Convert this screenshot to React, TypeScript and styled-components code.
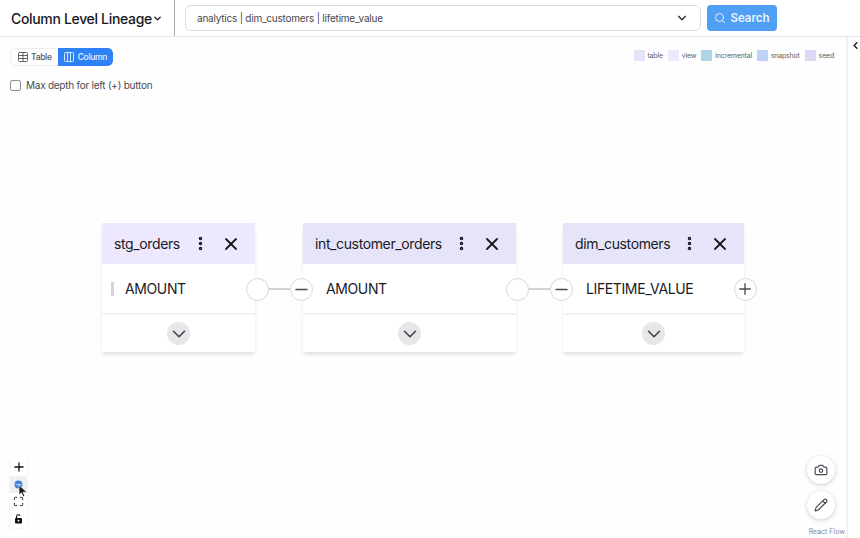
import { createGlobalStyle, styled } from "styled-components";
import {
  Camera,
  ChevronDown,
  ChevronLeft,
  Columns3,
  EllipsisVertical,
  Maximize,
  Minus,
  Pencil,
  Plus,
  Search,
  Table,
  X,
} from "lucide-react";

const GlobalStyle = createGlobalStyle`
  html, body { margin: 0; height: 100%; }
  body { background: #fff; font-family: Inter, "Liberation Sans", sans-serif; color: #111; overflow: hidden; }
`;

const Page = styled.div`
  width: 860px;
  height: 538px;
  display: flex;
  flex-direction: column;
  overflow: hidden;
`;

const Header = styled.header`
  height: 37px;
  flex: none;
  box-sizing: border-box;
  display: flex;
  align-items: stretch;
  border-bottom: 1px solid #e5e5e8;
`;

const TitleBox = styled.div`
  width: 175px;
  box-sizing: border-box;
  padding-left: 11px;
  display: flex;
  align-items: center;
  border-right: 1px solid #a9a9ad;
  font-size: 14px;
  font-weight: 500;
  letter-spacing: -0.33px;
  color: #17171c;
  white-space: nowrap;
`;

const SearchArea = styled.div`
  flex: 1;
  display: flex;
  align-items: center;
  padding-left: 10px;
  gap: 6px;
`;

const SelectBox = styled.div`
  width: 516px;
  height: 26px;
  box-sizing: border-box;
  display: flex;
  align-items: center;
  justify-content: space-between;
  padding: 0 11px;
  border: 1px solid #dcdce0;
  border-radius: 6px;
  font-size: 10px;
  letter-spacing: -0.22px;
  color: #47474f;
`;

const SearchButton = styled.div`
  width: 70px;
  height: 26px;
  display: flex;
  align-items: center;
  justify-content: center;
  gap: 4px;
  border-radius: 4px;
  background: #4f9ff4;
  color: #eaf3fe;
  font-size: 11.5px;
  font-weight: 600;
`;

const Body = styled.div`
  flex: 1;
  display: flex;
  min-height: 0;
`;

const Canvas = styled.main`
  position: relative;
  flex: 1;
  background: #fefefe;
`;

const SidePanel = styled.aside`
  width: 14px;
  flex: none;
  box-sizing: border-box;
  padding: 3px 0 0 2px;
  border-left: 2px solid #f1f1f3;
  background: #fff;
  color: #17171c;

  svg {
    display: block;
  }
`;

const TopLeft = styled.div`
  position: absolute;
  left: 10px;
  top: 11px;
  display: flex;
  flex-direction: column;
  align-items: flex-start;
  gap: 13px;
`;

const Toggle = styled.div`
  display: flex;
  height: 18px;
  border-radius: 5px;
  box-shadow: 0 0 0 1px #eeeef0 inset;
  overflow: hidden;
`;

const ToggleItem = styled.div<{ $active?: boolean }>`
  display: flex;
  align-items: center;
  gap: 2.5px;
  padding: ${(p) => (p.$active ? "0 6px 0 5.5px" : "0 6px 0 6.5px")};
  font-size: 8.5px;
  font-weight: 500;
  letter-spacing: -0.3px;
  color: ${(p) => (p.$active ? "#e8f1fe" : "#55555c")};
  background: ${(p) => (p.$active ? "#2f82f6" : "transparent")};
  border-radius: ${(p) => (p.$active ? "0 5px 5px 0" : "0")};
`;

const DepthRow = styled.label`
  display: flex;
  align-items: center;
  gap: 5px;
  font-size: 10px;
  letter-spacing: -0.25px;
  color: #4a4a52;
`;

const CheckBox = styled.span`
  width: 11px;
  height: 11px;
  box-sizing: border-box;
  border: 1px solid #8f8f96;
  border-radius: 2px;
  background: #fff;
`;

const Legend = styled.div`
  position: absolute;
  right: 12px;
  top: 13px;
  display: flex;
  gap: 5px;
`;

const LegendItem = styled.div`
  display: flex;
  align-items: center;
  gap: 3px;
  font-size: 7px;
  letter-spacing: -0.2px;
  color: #62626a;
`;

const Swatch = styled.span<{ $color: string }>`
  width: 11px;
  height: 11px;
  background: ${(p) => p.$color};
`;

const Node = styled.section<{ $x: number; $w: number }>`
  position: absolute;
  left: ${(p) => p.$x}px;
  top: 186px;
  width: ${(p) => p.$w}px;
  height: 129px;
  display: flex;
  flex-direction: column;
  background: #fff;
  box-shadow: 0 3px 4px -1px rgba(0, 0, 0, 0.14);
`;

const NodeHeader = styled.div<{ $color: string }>`
  height: 41px;
  flex: none;
  display: flex;
  align-items: center;
  padding: 0 14px 0 12px;
  background: ${(p) => p.$color};
  font-size: 14px;
  letter-spacing: -0.38px;
  color: #1a1a1f;
`;

const NodeName = styled.span`
  flex: 1;
  white-space: nowrap;
`;

const NodeActions = styled.div`
  display: flex;
  align-items: center;
  gap: 12px;
  color: #17171c;
`;

const ColumnRow = styled.div`
  height: 51px;
  flex: none;
  box-sizing: border-box;
  display: flex;
  align-items: center;
  padding-left: 23px;
  border-bottom: 2px solid #f1f1f3;
  font-size: 14px;
  letter-spacing: -0.38px;
  color: #1a1a1f;
`;

const GripMark = styled.span`
  position: absolute;
  left: 9px;
  width: 3px;
  height: 14px;
  background: #d5d5da;
`;

const NodeFooter = styled.div`
  flex: 1;
  display: flex;
  align-items: center;
  justify-content: center;
`;

const ExpandButton = styled.div`
  width: 23px;
  height: 23px;
  display: flex;
  align-items: center;
  justify-content: center;
  border-radius: 50%;
  background: #e7e7ea;
  color: #3f3f47;
`;

const Handle = styled.div<{ $x: number }>`
  position: absolute;
  left: ${(p) => p.$x - 11.5}px;
  top: 240.5px;
  width: 23px;
  height: 23px;
  box-sizing: border-box;
  display: flex;
  align-items: center;
  justify-content: center;
  border-radius: 50%;
  border: 1.5px solid #d8d8dc;
  background: #fff;
  color: #4a4a52;
`;

const Edge = styled.div<{ $x: number; $w: number }>`
  position: absolute;
  left: ${(p) => p.$x}px;
  top: 251px;
  width: ${(p) => p.$w}px;
  height: 1.5px;
  background: #d2d2d6;
`;

const Controls = styled.div`
  position: absolute;
  left: 10px;
  top: 421px;
  display: flex;
  flex-direction: column;
  background: #fff;
  box-shadow: 0 0 2px rgba(0, 0, 0, 0.1);
`;

const ControlButton = styled.div<{ $hover?: boolean }>`
  width: 17px;
  height: 17.5px;
  display: flex;
  align-items: center;
  justify-content: center;
  color: #111;
  background: ${(p) => (p.$hover ? "#f1f1f3" : "#fff")};
`;

const Cursor = styled.svg`
  position: absolute;
  left: 18px;
  top: 447px;
`;

const FloatingStack = styled.div`
  position: absolute;
  left: 807px;
  top: 419px;
  display: flex;
  flex-direction: column;
  gap: 7px;
`;

const RoundButton = styled.div`
  width: 28px;
  height: 28px;
  display: flex;
  align-items: center;
  justify-content: center;
  border-radius: 50%;
  background: #fff;
  box-shadow: 0 1px 4px rgba(0, 0, 0, 0.2);
  color: #4a4a55;
`;

const Attribution = styled.span`
  position: absolute;
  right: 1px;
  bottom: 2px;
  font-size: 7px;
  color: #8b8b92;
`;

const legend = [
  { name: "table", color: "#e5e3fa" },
  { name: "view", color: "#eee8ff" },
  { name: "incremental", color: "#aed6e6" },
  { name: "snapshot", color: "#bcd3f5" },
  { name: "seed", color: "#dcd8f5" },
];

const nodes = [
  { name: "stg_orders", column: "AMOUNT", x: 102, w: 153, color: "#ede8fe", grip: true },
  { name: "int_customer_orders", column: "AMOUNT", x: 303, w: 213, color: "#e5e4f9" },
  { name: "dim_customers", column: "LIFETIME_VALUE", x: 563, w: 181, color: "#e5e4f9" },
];

const App = () => {
  return (
    <Page>
      <GlobalStyle />
      <Header>
        <TitleBox>
          Column Level Lineage
          <ChevronDown size={11} strokeWidth={3} />
        </TitleBox>
        <SearchArea>
          <SelectBox>
            analytics | dim_customers | lifetime_value
            <ChevronDown size={14} strokeWidth={2} color="#222" />
          </SelectBox>
          <SearchButton>
            <Search size={12} />
            Search
          </SearchButton>
        </SearchArea>
      </Header>
      <Body>
        <Canvas>
          <TopLeft>
            <Toggle>
              <ToggleItem>
                <Table size={12} strokeWidth={1.8} />
                Table
              </ToggleItem>
              <ToggleItem $active>
                <Columns3 size={12} strokeWidth={1.8} />
                Column
              </ToggleItem>
            </Toggle>
            <DepthRow>
              <CheckBox />
              Max depth for left (+) button
            </DepthRow>
          </TopLeft>

          <Legend>
            {legend.map((item) => (
              <LegendItem key={item.name}>
                <Swatch $color={item.color} />
                {item.name}
              </LegendItem>
            ))}
          </Legend>

          <Edge $x={268} $w={22} />
          <Edge $x={528} $w={22} />

          {nodes.map((node) => (
            <Node key={node.name} $x={node.x} $w={node.w}>
              <NodeHeader $color={node.color}>
                <NodeName>{node.name}</NodeName>
                <NodeActions>
                  <EllipsisVertical size={17} strokeWidth={3} />
                  <X size={20} strokeWidth={2.2} />
                </NodeActions>
              </NodeHeader>
              <ColumnRow>
                {node.grip && <GripMark />}
                {node.column}
              </ColumnRow>
              <NodeFooter>
                <ExpandButton>
                  <ChevronDown size={22} strokeWidth={1.7} />
                </ExpandButton>
              </NodeFooter>
            </Node>
          ))}

          <Handle $x={257} />
          <Handle $x={301}>
            <Minus size={19} strokeWidth={1.8} />
          </Handle>
          <Handle $x={517} />
          <Handle $x={561}>
            <Minus size={19} strokeWidth={1.8} />
          </Handle>
          <Handle $x={745}>
            <Plus size={18} strokeWidth={1.8} />
          </Handle>

          <Controls>
            <ControlButton>
              <Plus size={14} strokeWidth={2.2} />
            </ControlButton>
            <ControlButton $hover>
              <svg width="9" height="9" viewBox="0 0 9 9">
                <circle cx="4.5" cy="4.5" r="4" fill="#3b7fd8" />
                <rect x="1.5" y="3.8" width="6" height="1.4" fill="#a9c8ef" />
              </svg>
            </ControlButton>
            <ControlButton>
              <Maximize size={11} strokeWidth={2} />
            </ControlButton>
            <ControlButton>
              <svg width="9" height="10" viewBox="0 0 9 10">
                <path d="M2.5 4V2.600C2.500 1.400 3.400 .8 4.500 .8c.7 0 1.300 .3 1.700 .8" fill="none" stroke="#111" strokeWidth="1.100" />
                <rect x="1" y="4" width="7" height="5.500" rx="0.8" fill="#111" />
                <circle cx="4.500" cy="6.700" r="0.9" fill="#fff" />
              </svg>
            </ControlButton>
          </Controls>
          <Cursor width="10" height="14" viewBox="0 0 10 14">
            <path d="M1 1v10l2.400-2.200 1.700 4 1.700-.8-1.700-3.800H9z" fill="#1b1b20" stroke="#fff" strokeWidth="0.7" />
          </Cursor>

          <FloatingStack>
            <RoundButton>
              <Camera size={14} />
            </RoundButton>
            <RoundButton>
              <Pencil size={14} />
            </RoundButton>
          </FloatingStack>
          <Attribution>React Flow</Attribution>
        </Canvas>
        <SidePanel>
          <ChevronLeft size={11} strokeWidth={3} />
        </SidePanel>
      </Body>
    </Page>
  );
};

export default App;
